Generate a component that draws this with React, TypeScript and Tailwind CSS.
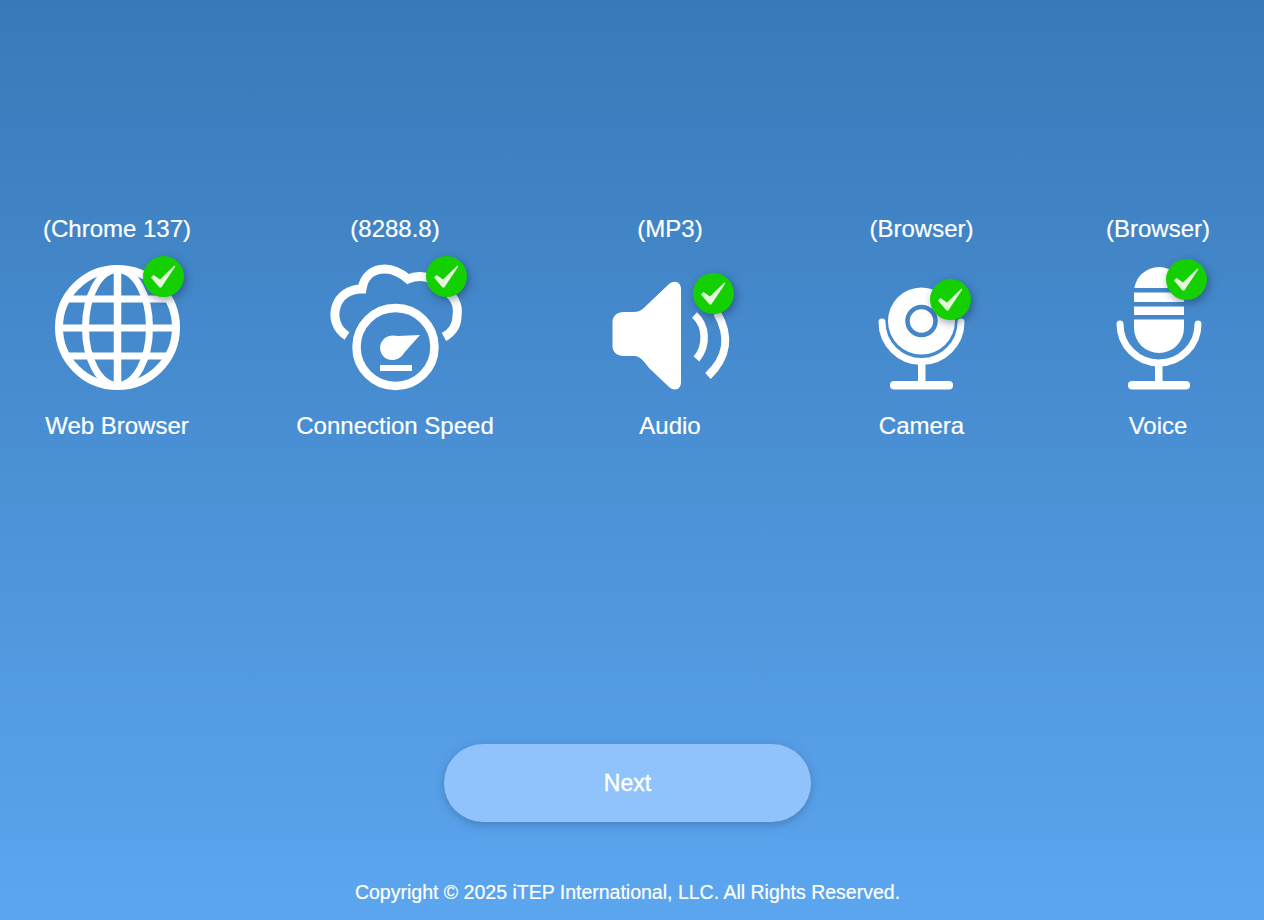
import React from "react";

function Badge({ className }: { className: string }) {
  return (
    <div className={`absolute h-[41px] w-[41px] rounded-full bg-[#14d000] shadow-[2px_3px_8px_rgba(20,40,70,0.45)] ${className}`}>
      <svg viewBox="-20.5 -20.5 41 41" className="h-full w-full">
        <path d="M-12.5 1 L-10 -1.5 L-3.5 3 L11 -11 L11.8 -10 L-2.2 11 L-4 11 Z" fill="#e6f8dc" />
      </svg>
    </div>
  );
}

function Item({ caption, label, badge, children }: { caption: string; label: string; badge: string; children: React.ReactNode }) {
  return (
    <div className="flex flex-col items-center">
      <div className="h-7 whitespace-nowrap text-center text-[24px] leading-7 [-webkit-text-stroke:0.2px_#fff]">{caption}</div>
      <div className="relative mt-[22px] h-[125px] w-[125px]">
        <svg viewBox="0 0 125 125" className="h-[125px] w-[125px] overflow-visible blur-[0.5px]">
          {children}
        </svg>
        <Badge className={badge} />
      </div>
      <div className="mt-[22px] h-7 whitespace-nowrap text-center text-[24px] leading-7 [-webkit-text-stroke:0.2px_#fff]">{label}</div>
    </div>
  );
}

const BLUE = "#4586c8";

export default function App() {
  return (
    <div className="h-[920px] w-full overflow-hidden bg-gradient-to-b from-[#387ab9] to-[#5ca6f0] font-['Liberation_Sans',Arial,sans-serif] text-white">
      <div className="grid grid-cols-[234px_322px_228px_275px_198px] pt-[215px]">
        <Item caption="(Chrome 137)" label="Web Browser" badge="left-[88px] top-[-9px]">
          <g fill="none" stroke="#fff">
            <circle cx="62.5" cy="62.5" r="58.5" strokeWidth="8" />
            <ellipse cx="62.5" cy="62.5" rx="32" ry="58" strokeWidth="7" />
            <path d="M62.5 4V121" strokeWidth="7.5" />
            <path d="M4 63H121" strokeWidth="7" />
            <path d="M12 34H113M12 91H113" strokeWidth="7" />
          </g>
        </Item>
        <Item caption="(8288.8)" label="Connection Speed" badge="left-[93px] top-[-9px]">
          <path
            d="M14 71 C3 64 0 52 3 42 C6 31 16 24 29 24 C31 11 40 4 52 4 C62 4 69 9 75 14 C86 9 100 11 108 23 C120 29 126 39 124 51 C124 60 120 67 111 72"
            fill="none"
            stroke="#fff"
            strokeWidth="9"
          />
          <circle cx="62.5" cy="82" r="39" fill="none" stroke="#fff" strokeWidth="8.5" />
          <path d="M50 75 C54 70 60 70 65 71 L87 70 L71 88 C67 96 56 97 51 92 C46 87 46 79 50 75 Z" fill="#fff" />
          <rect x="47" y="100" width="32" height="6" fill="#fff" />
        </Item>
        <Item caption="(MP3)" label="Audio" badge="left-[85px] top-[8px]">
          <path
            d="M16 47 L26 47 C33 47 37 42 41 38 L60 20 C66 14 73 17 73 24 L73 117 C73 125 66 127 60 121 L41 103 C37 98 33 91 26 91 L16 91 C9 91 4.5 87 4.5 81 L4.5 57 C4.5 51 9 47 16 47 Z"
            fill="#fff"
          />
          <path d="M86.5 50 C98 60 100 80 88.5 94" fill="none" stroke="#fff" strokeWidth="7.5" />
          <path d="M109 48 C122 70 120 92 100 111" fill="none" stroke="#fff" strokeWidth="8" />
        </Item>
        <Item caption="(Browser)" label="Camera" badge="left-[71px] top-[14px]">
          <circle cx="62.5" cy="56" r="33.5" fill="#fff" />
          <circle cx="62.5" cy="56" r="14" fill="#fff" stroke={BLUE} strokeWidth="4.5" />
          <path d="M23 57 A39.5 39.5 0 0 0 102 57" fill="none" stroke="#fff" strokeWidth="7" strokeLinecap="round" />
          <rect x="59" y="97" width="7.5" height="21" fill="#fff" />
          <rect x="31" y="116" width="63" height="8.5" rx="4" fill="#fff" />
        </Item>
        <Item caption="(Browser)" label="Voice" badge="left-[70px] top-[-6px]">
          <rect x="38" y="2" width="50" height="86" rx="25" fill="#fff" />
          <rect x="38" y="23" width="50" height="4.5" fill={BLUE} />
          <rect x="38" y="37" width="50" height="4.5" fill={BLUE} />
          <rect x="38" y="50" width="50" height="4.5" fill={BLUE} />
          <path d="M24 59 A39 39 0 0 0 102 59" fill="none" stroke="#fff" strokeWidth="7" strokeLinecap="round" />
          <rect x="59" y="97" width="7.5" height="21" fill="#fff" />
          <rect x="32" y="116" width="62" height="8.5" rx="4" fill="#fff" />
        </Item>
      </div>
      <div className="flex w-[1255px] flex-col items-center">
        <button className="mt-[304px] h-[78px] w-[367px] rounded-[39px] bg-[#90c3fb] text-[23px] text-white shadow-[0_3px_10px_rgba(40,70,110,0.35)] [-webkit-text-stroke:0.4px_#fff]">
          Next
        </button>
        <div className="mt-[58px] h-6 whitespace-nowrap text-[19.5px] leading-6 [-webkit-text-stroke:0.2px_#fff]">
          Copyright © 2025 iTEP International, LLC. All Rights Reserved.
        </div>
      </div>
    </div>
  );
}
